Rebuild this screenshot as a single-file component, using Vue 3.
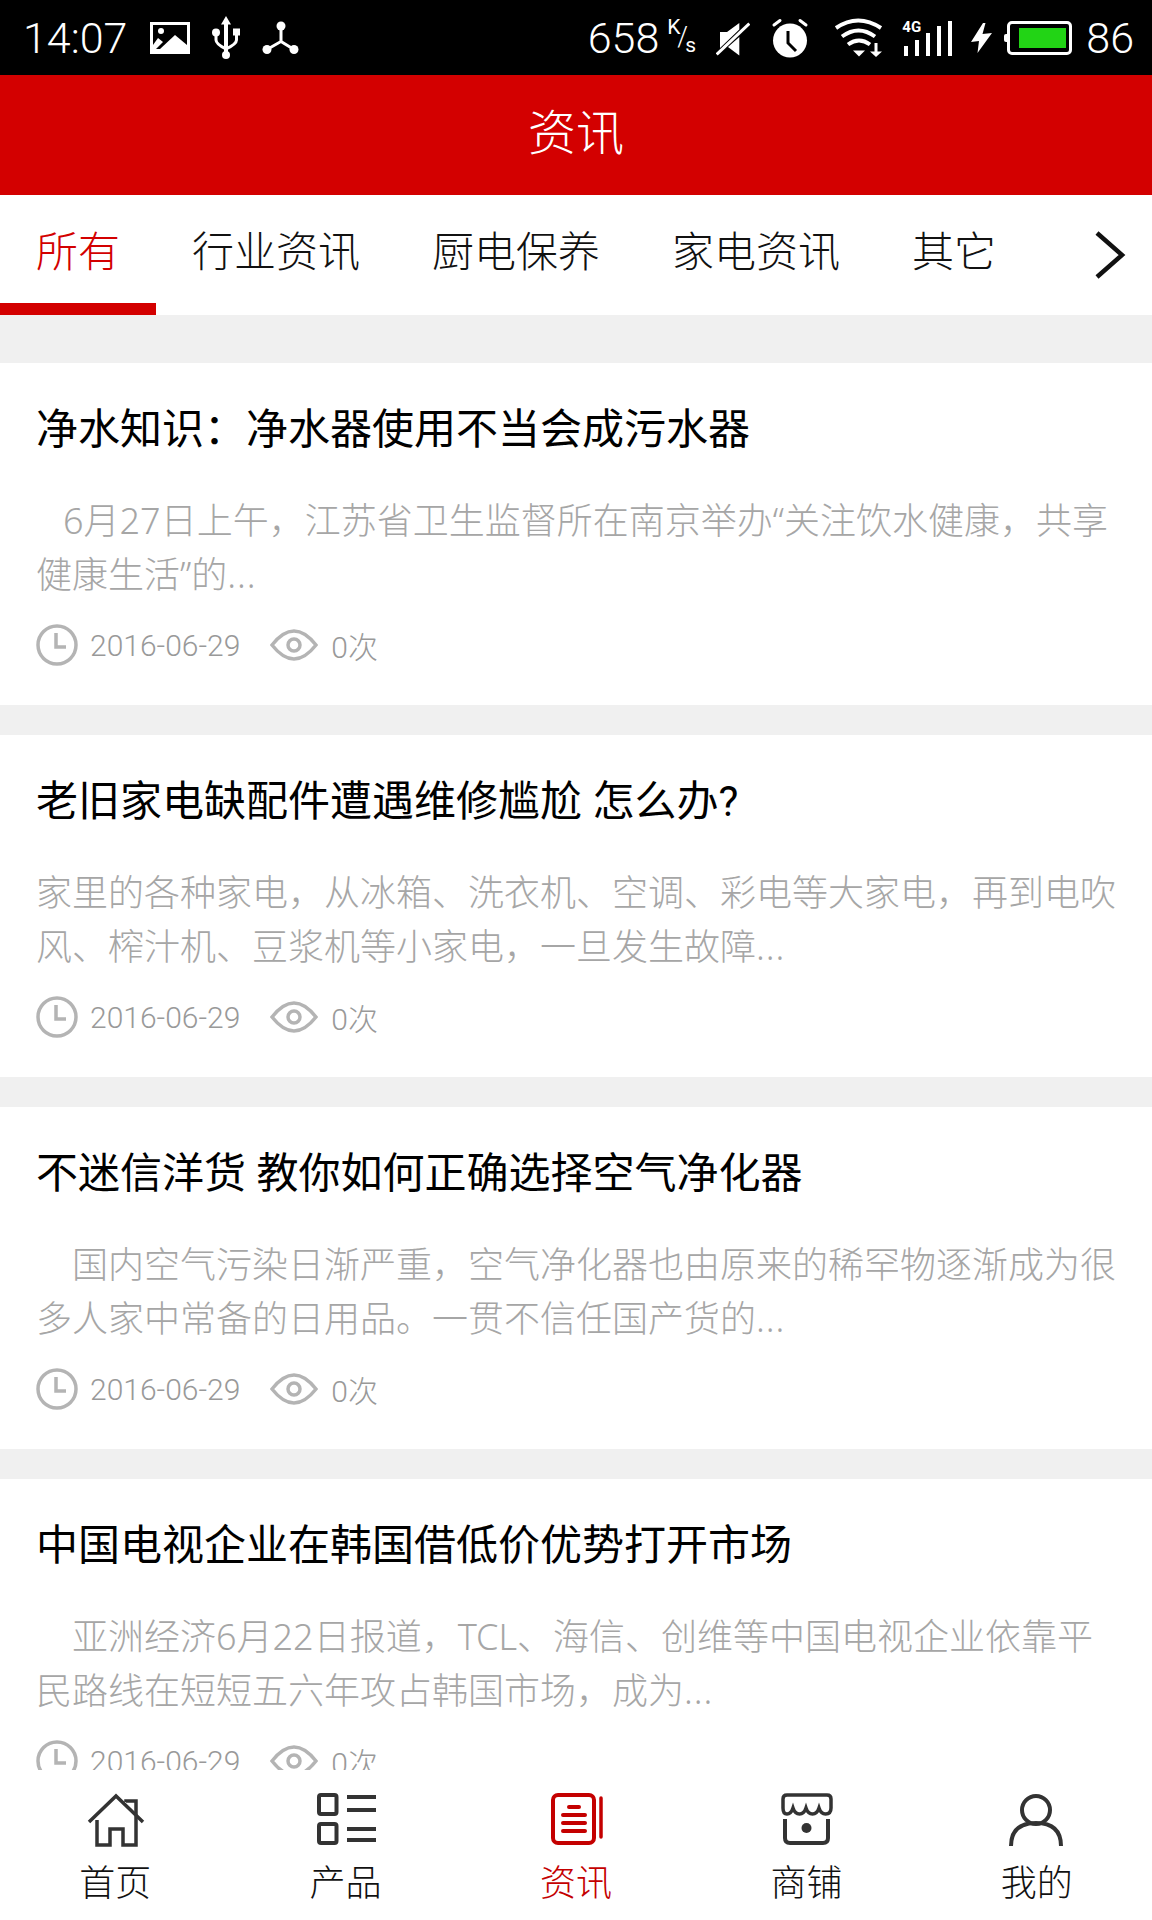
<script setup>
const tabs = ['所有', '行业资讯', '厨电保养', '家电资讯', '其它']
const articles = [
  { title: '净水知识：净水器使用不当会成污水器', indent: 27, desc: '6月27日上午，江苏省卫生监督所在南京举办“关注饮水健康，共享健康生活”的' },
  { title: '老旧家电缺配件遭遇维修尴尬 怎么办?', indent: 0, desc: '家里的各种家电，从冰箱、洗衣机、空调、彩电等大家电，再到电吹风、榨汁机、豆浆机等小家电，一旦发生故障' },
  { title: '不迷信洋货 教你如何正确选择空气净化器', indent: 36, desc: '国内空气污染日渐严重，空气净化器也由原来的稀罕物逐渐成为很多人家中常备的日用品。一贯不信任国产货的' },
  { title: '中国电视企业在韩国借低价优势打开市场', indent: 36, desc: '亚洲经济6月22日报道，TCL、海信、创维等中国电视企业依靠平民路线在短短五六年攻占韩国市场，成为' }
]
const nav = [
  { key: 'home', label: '首页' },
  { key: 'product', label: '产品' },
  { key: 'news', label: '资讯', active: true },
  { key: 'shop', label: '商铺' },
  { key: 'user', label: '我的' }
]
</script>

<template>
  <div class="page">
    <div class="status">
      <span class="time">14:07</span>
      <svg class="s-img" width="40" height="32" viewBox="0 0 40 32">
        <rect width="40" height="32" fill="#fff" />
        <rect x="3" y="3" width="34" height="24" fill="#000" />
        <circle cx="11" cy="9" r="3" fill="#fff" />
        <path d="M3 23 L8 16 L13 20 L6 27 H3 Z" fill="#fff" />
        <path d="M10 27 L25 13 L37 23 V27 Z" fill="#fff" />
      </svg>
      <svg class="s-usb" width="30" height="44" viewBox="0 0 30 44" fill="#fff">
        <path d="M14 0 L19 8.500 H16 V36 H12 V8.500 H9 Z" />
        <circle cx="14" cy="39" r="4" />
        <circle cx="4" cy="16.500" r="4" />
        <rect x="21" y="12.500" width="7" height="7" />
        <path d="M4 19 V24 Q4 28 14 33 M24.500 19 V24 Q24.500 28 14 33" fill="none" stroke="#fff" stroke-width="3" />
      </svg>
      <svg class="s-tri" width="40" height="34" viewBox="0 0 40 34" fill="#fff">
        <circle cx="20" cy="5" r="4.500" />
        <circle cx="6" cy="28.500" r="4.500" />
        <circle cx="33" cy="28.500" r="4.500" />
        <path d="M20 5 V20.500 L6 28.500 M20 20.500 L33 28.500" fill="none" stroke="#fff" stroke-width="3" />
      </svg>
      <span class="spacer"></span>
      <span class="speed">658</span>
      <span class="unit"><i class="k">K</i><i class="sl">/</i><i class="sx">s</i></span>
      <svg class="s-mute" width="34" height="38" viewBox="0 0 34 38" fill="#fff">
        <path d="M4 13 H11 L23.300 4 V10.500 L4 29 Z" />
        <path d="M23.300 18 V36.500 L12 28 Z" />
        <path d="M0.700 35.500 L33.300 4.500" stroke="#fff" stroke-width="3" />
      </svg>
      <svg class="s-alarm" width="38" height="40" viewBox="0 0 38 40">
        <circle cx="19" cy="22.500" r="17" fill="#fff" />
        <path d="M17 13 V25 L25 33" fill="none" stroke="#000" stroke-width="3" />
        <path d="M3 7 L9 2.500 M35 7 L29 2.500" stroke="#fff" stroke-width="3" stroke-linecap="round" />
      </svg>
      <svg class="s-wifi" width="50" height="44" viewBox="0 0 50 44" fill="none" stroke="#fff" stroke-width="4">
        <path d="M2 12 Q24 -3 47 12" />
        <path d="M8 20.500 Q24.500 8.500 41 20.500" />
        <path d="M14 28.500 Q25 20.500 36 28.500" />
        <path d="M19 34.500 H31 L25 40.500 Z" fill="#fff" stroke="none" />
        <path d="M42 27 V36" stroke-width="3" />
        <path d="M36 35.500 H48 L42 41 Z" fill="#fff" stroke="none" />
      </svg>
      <div class="s-signal">
        <span class="fg">4G</span>
        <i style="height:10px"></i><i style="height:16px"></i><i style="height:23px"></i><i style="height:30px"></i><i style="height:35px"></i>
      </div>
      <svg class="s-bolt" width="22" height="30" viewBox="0 0 22 30" fill="#fff">
        <path d="M13 0 L1 19 L9 18 L7.500 30 L22 10 L12.500 11 L15.500 0 Z" />
      </svg>
      <div class="battery"><div class="fill"></div></div>
      <span class="level">86</span>
    </div>

    <header class="topbar">资讯</header>

    <div class="tabs">
      <div v-for="(t, i) in tabs" :key="t" class="tab" :class="{ on: i === 0 }">{{ t }}</div>
      <span class="spacer"></span>
      <svg class="chev" width="32" height="48" viewBox="0 0 32 48">
        <path d="M3 2 L28 24 L3 46" fill="none" stroke="#111" stroke-width="4.500" />
      </svg>
    </div>

    <main class="list">
      <article v-for="a in articles" :key="a.title" class="card">
        <h2 class="title">{{ a.title }}</h2>
        <p class="desc" :style="{ textIndent: a.indent + 'px' }">{{ a.desc }}<span class="more">...</span></p>
        <div class="meta">
          <svg width="42" height="42" viewBox="0 0 42 42" fill="none" stroke="#b4b4b4" stroke-width="3.500">
            <circle cx="21" cy="21" r="19" />
            <path d="M20 9 V23 H30" />
          </svg>
          <span class="date">2016-06-29</span>
          <svg class="eye" width="48" height="36" viewBox="0 0 48 36" fill="none" stroke="#b4b4b4" stroke-width="3.500">
            <path d="M2 18 Q24 -10 46 18 Q24 46 2 18 Z" />
            <circle cx="24" cy="18" r="6" />
          </svg>
          <span class="count">0次</span>
        </div>
      </article>
    </main>

    <nav class="nav">
      <div v-for="n in nav" :key="n.key" class="nav-item" :class="{ on: n.active }">
        <svg class="nav-icon" width="60" height="54" viewBox="0 0 60 54" fill="none" stroke="currentColor" stroke-width="4">
          <template v-if="n.key === 'home'">
            <path d="M4 29 L31 3 L58 29" stroke-width="3.500" />
            <path d="M12 27 V52 H25 V36 H38 V52 H51 V19 M41 9 V8 H51 V19" stroke-width="3.500" />
          </template>
          <template v-else-if="n.key === 'product'">
            <rect x="3" y="2" width="17.500" height="19" rx="2" />
            <rect x="3" y="31" width="17.500" height="19" rx="2" />
            <path d="M31 4 H60 M31 17 H60 M31 36 H60 M31 47 H60" />
          </template>
          <template v-else-if="n.key === 'news'">
            <rect x="7" y="2" width="41" height="48" rx="5" />
            <path d="M55 5 V44" stroke-width="3.500" stroke-linecap="round" />
            <path d="M23 14 H33 M17 22 H39 M17 30 H39 M17 38 H39" stroke-width="4" stroke-linecap="round" />
          </template>
          <template v-else-if="n.key === 'shop'">
            <path d="M11 2 H51 Q55 2 55 6 V15 Q55 21 49.500 21 Q45 21 43 15 Q41 21 36.500 21 Q32 21 30 15 Q28 21 23.500 21 Q19 21 17 15 Q15 21 11 21 Q7 21 7 15 V6 Q7 2 11 2 Z" stroke-width="3.500" />
            <path d="M9 26 V45 Q9 50 14 50 H47 Q52 50 52 45 V26" />
            <circle cx="30.500" cy="35" r="5" fill="currentColor" stroke="none" />
          </template>
          <template v-else>
            <circle cx="29" cy="17" r="14" />
            <path d="M4 53 Q4 30 29 30 Q54 30 54 53" />
          </template>
        </svg>
        <span class="nav-label">{{ n.label }}</span>
      </div>
    </nav>
  </div>
</template>

<style>
html, body { margin: 0; padding: 0; background: #fff; }
</style>

<style scoped>
.page {
  width: 1152px;
  height: 1920px;
  display: flex;
  flex-direction: column;
  overflow: hidden;
  background: #f0f0f0;
  font-family: Roboto, "Noto Sans CJK SC", sans-serif;
  font-weight: 300;
}
.status {
  height: 75px;
  flex: none;
  background: #000;
  color: #fff;
  display: flex;
  align-items: center;
  padding: 0 18px 0 23px;
  box-sizing: border-box;
}
.spacer { flex: 1; }
.time { font-size: 43px; width: 127px; }
.s-usb { margin-left: 22px; }
.s-tri { margin-left: 19px; }
.speed { font-size: 43px; }
.unit { position: relative; width: 32px; height: 40px; margin-left: 8px; font-size: 21px; font-weight: 400; }
.unit i { position: absolute; font-style: normal; }
.unit .k { left: 0; top: -3px; }
.unit .sl { left: 10px; top: 3px; font-size: 27px; font-weight: 300; }
.unit .sx { left: 18px; top: 15px; }
.s-mute { margin-left: 17px; }
.s-alarm { margin-left: 21px; }
.s-wifi { margin-left: 25px; }
.s-signal {
  position: relative;
  width: 51px;
  height: 36px;
  margin-left: 18px;
  padding-left: 2px;
  box-sizing: border-box;
  display: flex;
  align-items: flex-end;
  gap: 7px;
}
.s-signal i { width: 4px; background: #fff; display: block; }
.s-signal .fg { position: absolute; left: 0; top: -2px; font-size: 15px; font-weight: 700; line-height: 18px; }
.s-bolt { margin-left: 17px; }
.battery {
  position: relative;
  width: 65px;
  height: 34px;
  margin-left: 15px;
  box-sizing: border-box;
  border: 3px solid #fff;
  border-radius: 5px;
  padding: 4px 3px 4px 9px;
}
.battery::before {
  content: "";
  position: absolute;
  left: -6px;
  top: 10px;
  width: 3px;
  height: 8px;
  background: #fff;
  border-radius: 2px 0 0 2px;
}
.fill { width: 100%; height: 100%; background: #22d415; }
.level { font-size: 43px; margin-left: 14px; }

.topbar {
  height: 120px;
  flex: none;
  background: #d30000;
  color: #fff;
  font-size: 48px;
  line-height: 117px;
  text-align: center;
  box-sizing: border-box;
}

.tabs {
  height: 120px;
  flex: none;
  background: #fff;
  display: flex;
  align-items: flex-start;
  padding-right: 26px;
  box-sizing: border-box;
}
.tab {
  height: 120px;
  box-sizing: border-box;
  padding: 8px 36px 0;
  font-size: 42px;
  line-height: 100px;
  border-bottom: 12px solid transparent;
  color: #111;
}
.tab.on { color: #d30000; border-bottom-color: #d30000; }
.chev { margin-top: 36px; }

.list {
  flex: 1;
  min-height: 0;
  overflow: hidden;
  padding-top: 48px;
}
.card {
  height: 342px;
  box-sizing: border-box;
  background: #fff;
  margin-bottom: 30px;
  padding: 42px 36px 0;
}
.title {
  margin: 0;
  font-size: 42px;
  line-height: 50px;
  font-weight: 400;
  color: #000;
  white-space: nowrap;
}
.desc {
  margin: 39px 0 0;
  font-family: "Noto Sans", "Noto Sans CJK SC", sans-serif;
  font-size: 36px;
  line-height: 54px;
  color: #a6a6a6;
  height: 108px;
}
.more { letter-spacing: 1px; }
.meta {
  margin-top: 22px;
  height: 42px;
  display: flex;
  align-items: center;
  font-size: 30px;
  color: #999;
}
.date { margin-left: 12px; }
.eye { margin-left: 30px; }
.count { margin-left: 13px; }

.nav {
  height: 150px;
  flex: none;
  background: #fff;
  display: flex;
}
.nav-item {
  flex: 1;
  display: flex;
  flex-direction: column;
  align-items: center;
  color: #333;
  padding-top: 23px;
}
.nav-item.on { color: #c40000; }
.nav-icon { display: block; }
.nav-label {
  margin-top: 17px;
  font-size: 36px;
  line-height: 40px;
  color: #111;
}
.nav-item.on .nav-label { color: #c40000; }
</style>
